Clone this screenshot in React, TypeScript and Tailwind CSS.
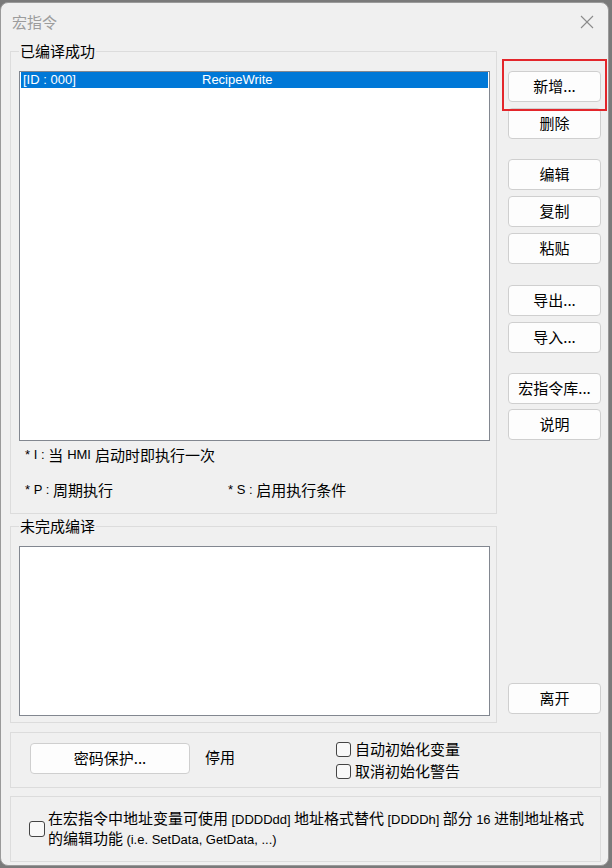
import React from "react";

const cjk = "font-['Noto_Sans_CJK_SC','Noto_Sans',sans-serif]";
const latin = "font-['Liberation_Sans','Noto_Sans',sans-serif]";

function Btn({ label, className }: { label: string; className: string }) {
  return (
    <button
      type="button"
      className={`flex h-[31px] w-[93px] items-center justify-center rounded-[4px] border border-[#cfcfcf] bg-[#fdfdfd] text-[15px] text-black ${className}`}
    >
      {label}
    </button>
  );
}

function Check({ label, className = "" }: { label: React.ReactNode; className?: string }) {
  return (
    <div className={`flex items-center gap-[4px] ${className}`}>
      <span className="h-[15px] w-[15px] shrink-0 rounded-[3px] border border-[#444] bg-[#f8f8f8]" />
      <span className="text-[15px] leading-[22px] text-black">{label}</span>
    </div>
  );
}

export default function App() {
  return (
    <div className={`h-[868px] w-[612px] overflow-hidden bg-[#7a7a7a] ${cjk}`}>
      <div className="mt-[2px] flex h-[864px] w-[609px] flex-col rounded-[8px] border border-[#9a9a9a] bg-[#f0f0f0]">
        {/* title bar */}
        <div className="flex h-[38px] items-center justify-between pl-[11px] pr-[14px]">
          <span className="text-[15px] text-[#9c9c9c]">宏指令</span>
          <svg width="14" height="14" viewBox="0 0 14 14" fill="none" stroke="#8c8c8c" strokeWidth="1.1">
            <line x1="1" y1="1" x2="13" y2="13" />
            <line x1="13" y1="1" x2="1" y2="13" />
          </svg>
        </div>

        <div className="flex pl-[9px]">
          <div className="flex w-[487px] flex-col">
            <fieldset className="h-[473px] border border-[#dcdcdc]">
              <legend className="ml-[8px] px-[1px] text-[15px] leading-[20px] text-black">已编译成功</legend>
              <div className="ml-[8px] mt-[10px] h-[370px] w-[471px] border border-[#828790] bg-white">
                <div className="mx-[1px] flex h-[16px] items-center bg-[#0078d7] text-[13px] text-white">
                  <span className={`w-[181px] pl-[2px] ${latin}`}>[ID : 000]</span>
                  <span className={latin}>RecipeWrite</span>
                </div>
              </div>
              <div className="ml-[14px] mt-[4px] flex h-[20px] items-center text-[15px] text-black">
                <span className={`whitespace-pre text-[13px] ${latin}`}>* I : </span>
                <span>当</span>
                <span className={`mx-[4px] text-[13px] ${latin}`}>HMI</span>
                <span>启动时即执行一次</span>
              </div>
              <div className="ml-[14px] mt-[15px] flex h-[20px] items-center text-[15px] text-black">
                <div className="flex w-[203px] items-center">
                  <span className={`whitespace-pre text-[13px] ${latin}`}>* P : </span>
                  <span>周期执行</span>
                </div>
                <span className={`whitespace-pre text-[13px] ${latin}`}>* S : </span>
                <span>启用执行条件</span>
              </div>
            </fieldset>

            <fieldset className="mt-[2px] h-[207px] border border-[#dcdcdc]">
              <legend className="ml-[8px] px-[1px] text-[15px] leading-[20px] text-black">未完成编译</legend>
              <div className="ml-[8px] mt-[10px] h-[170px] w-[471px] border border-[#828790] bg-white" />
            </fieldset>
          </div>

          <div className="relative flex flex-col pl-[11px]">
            <div className="absolute left-[5px] top-[18px] h-[52px] w-[105px] border-2 border-[#e3262b]" />
            <Btn label="新增..." className="mt-[30px]" />
            <Btn label="删除" className="mt-[6px]" />
            <Btn label="编辑" className="mt-[20px]" />
            <Btn label="复制" className="mt-[6px]" />
            <Btn label="粘贴" className="mt-[6px]" />
            <Btn label="导出..." className="mt-[21px]" />
            <Btn label="导入..." className="mt-[6px]" />
            <Btn label="宏指令库..." className="mt-[20px]" />
            <Btn label="说明" className="mt-[5px]" />
            <Btn label="离开" className="mt-[243px]" />
          </div>
        </div>

        {/* password panel */}
        <div className="ml-[9px] mt-[9px] flex h-[56px] w-[591px] border border-[#dcdcdc]">
          <button
            type="button"
            className="ml-[19px] mt-[10px] flex h-[31px] w-[160px] items-center justify-center rounded-[4px] border border-[#cfcfcf] bg-[#fdfdfd] text-[15px] text-black"
          >
            密码保护...
          </button>
          <span className="ml-[15px] mt-[14px] h-[20px] w-[131px] text-[15px] leading-[20px] text-black">停用</span>
          <div className="mt-[5px] flex flex-col">
            <Check label="自动初始化变量" />
            <Check label="取消初始化警告" />
          </div>
        </div>

        {/* address format panel */}
        <div className="ml-[9px] mt-[8px] flex h-[66px] w-[591px] items-center border border-[#dcdcdc] pl-[18px]">
          <span className="h-[16px] w-[16px] shrink-0 rounded-[3px] border border-[#444] bg-[#f8f8f8]" />
          <div className="ml-[3px] text-[15px] leading-[18px] text-black">
            <div>
              在宏指令中地址变量可使用 <span className={`text-[13px] ${latin}`}>[DDDDdd]</span> 地址格式替代{" "}
              <span className={`text-[13px] ${latin}`}>[DDDDh]</span> 部分 <span className={`text-[13px] ${latin}`}>16</span> 进制地址格式
            </div>
            <div>
              的编辑功能 <span className={`text-[13px] ${latin}`}>(i.e. SetData, GetData, ...)</span>
            </div>
          </div>
        </div>
      </div>
    </div>
  );
}
